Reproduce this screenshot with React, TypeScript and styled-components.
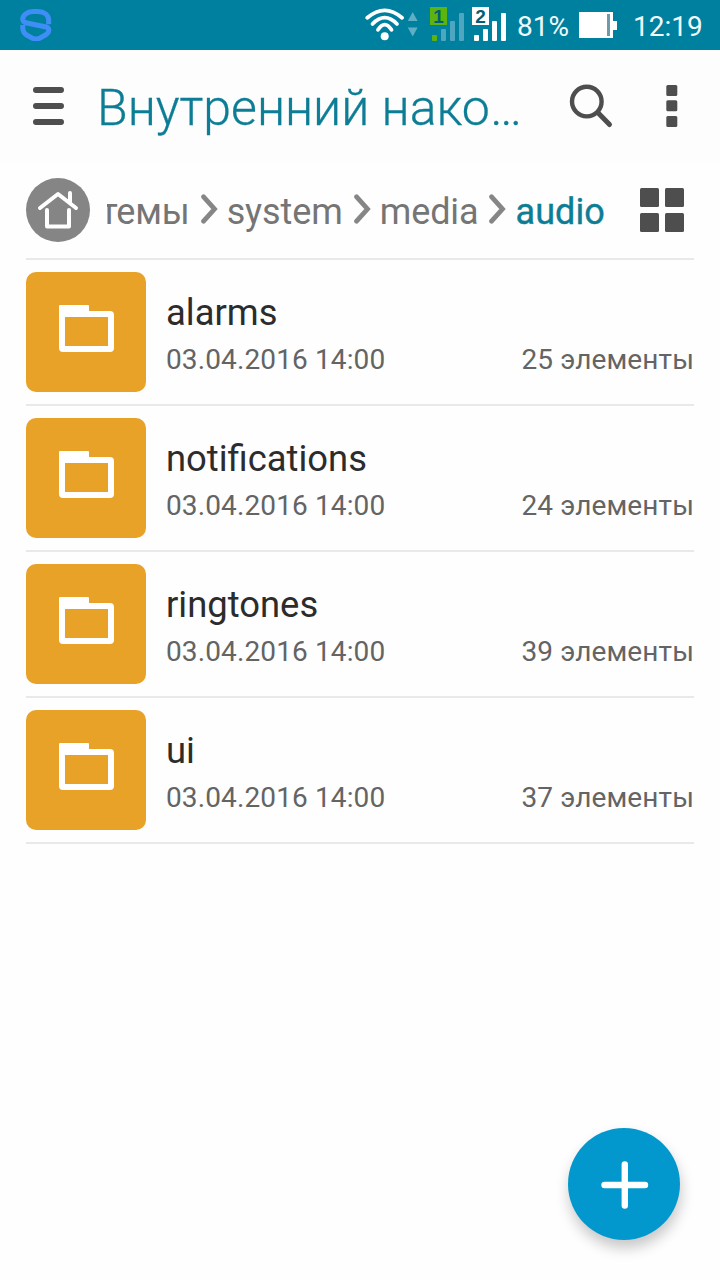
import React from "react";
import styled, { createGlobalStyle } from "styled-components";

const GlobalStyle = createGlobalStyle`
  * { box-sizing: border-box; }
  body { margin: 0; background: #fefefe; font-family: Roboto, "Noto Sans", sans-serif; }
  svg { display: block; flex: none; }
`;

const Screen = styled.div`
  position: relative;
  display: flex;
  flex-direction: column;
  width: 720px;
  height: 1280px;
  overflow: hidden;
  background: #fefefe;
`;

const StatusBar = styled.header`
  display: flex;
  align-items: center;
  height: 50px;
  padding: 0 16px 0 20px;
  background: #00809f;
  color: #f2fafc;
`;

const StatusIcons = styled.div`
  display: flex;
  align-items: center;
  margin-left: auto;
`;

const StatusText = styled.span<{ $left: number; $width: number }>`
  margin-left: ${(p) => p.$left}px;
  width: ${(p) => p.$width}px;
  font-size: 28px;
  line-height: 50px;
  padding-top: 3px;
  white-space: nowrap;
`;

const TitleBar = styled.div`
  display: flex;
  align-items: center;
  height: 114px;
  padding: 0 42px 2px 32px;
  background: #fdfdfd;
`;

const Title = styled.h1`
  flex: none;
  width: 440px;
  margin: 0 32px;
  padding-top: 4px;
  font-size: 50px;
  font-weight: 300;
  line-height: 66px;
  color: #0d7d96;
  -webkit-text-stroke: 0.3px #0d7d96;
  white-space: nowrap;
`;

const IconButton = styled.button`
  display: flex;
  flex: none;
  padding: 0;
  border: 0;
  background: none;
  color: #4e4e4e;
`;

const MenuButton = styled(IconButton)`
  margin-left: 51px;
`;

const Content = styled.main`
  padding: 0 26px;
`;

const PathBar = styled.nav`
  display: flex;
  align-items: center;
  height: 96px;
  padding: 0 10px 2px 0;
  border-bottom: 2px solid #e9e9e9;
`;

const Crumbs = styled.div`
  display: flex;
  flex: none;
  align-items: center;
  justify-content: flex-end;
  width: 498px;
  margin: 0 35px 0 17px;
  overflow: hidden;
`;

const Crumb = styled.span<{ $active?: boolean }>`
  flex: none;
  font-size: 36px;
  line-height: 48px;
  padding-top: 3px;
  letter-spacing: ${(p) => (p.$active ? 0.1 : -0.1)}px;
  color: ${(p) => (p.$active ? "#0d7d96" : "#757575")};
  -webkit-text-stroke: ${(p) => (p.$active ? "0.4px" : "0")} currentColor;
`;

const CrumbGap = styled.span`
  flex: none;
  margin: 0 9px 0 11px;
`;

const FileList = styled.ul`
  margin: 0;
  padding: 0;
  list-style: none;
`;

const FileRow = styled.li`
  display: flex;
  height: 146px;
  padding: 12px 0;
  border-bottom: 2px solid #e9e9e9;
`;

const FolderTile = styled.div`
  display: flex;
  flex: none;
  width: 120px;
  height: 120px;
  padding: 33px;
  border-radius: 10px;
  background: #e7a227;
`;

const FileInfo = styled.div`
  flex: 1;
  padding: 19px 0 0 20px;
`;

const FileName = styled.div`
  margin-bottom: 7px;
  font-size: 36.4px;
  line-height: 44px;
  color: #2c2c2c;
`;

const FileMeta = styled.div`
  display: flex;
  justify-content: space-between;
  font-size: 28px;
  line-height: 36px;
  letter-spacing: 0.12px;
  color: #646464;
`;

const AddButton = styled.button`
  position: absolute;
  right: 40px;
  bottom: 40px;
  display: flex;
  width: 112px;
  height: 112px;
  padding: 0;
  border: 0;
  border-radius: 50%;
  background: #0398cd;
  box-shadow: 1px 8px 14px rgba(0, 0, 0, 0.22);
`;

const LogoIcon = () => (
  <svg width="32" height="32" viewBox="0 0 32 32" fill="none" stroke="#3f8df6" strokeWidth="5">
    <path d="M28.7 15.2V11.5C28.7 6 24 2.7 18 2.6H13C7 2.7 2.6 6 2.8 10.4C3 12.6 4.4 13.4 7 14L25 17.8C28 18.5 29 19.5 28.8 21.4C28.6 24 27 25.2 25 26.3L20 29C17.5 30.2 14.5 30.2 12 29L7 26.3C4.3 24.7 3 22.8 2.8 19.6V16" />
  </svg>
);

const WifiIcon = () => (
  <svg width="65" height="50" viewBox="365 0 65 50" fill="none">
    <g stroke="#fff" strokeWidth="3.8" strokeLinecap="round">
      <path d="M367.3 17.8Q384.7 3 402 17.8" />
      <path d="M372.5 24Q384.7 11.4 397 24" />
      <path d="M378 29.8Q384.7 19.4 391.5 29.8" />
    </g>
    <circle cx="384.7" cy="36.2" r="4" fill="#fff" />
    <path d="M412.7 12L417.6 21H407.8ZM407.8 27.5H417.6L412.7 36.5Z" fill="#5eafc6" />
  </svg>
);

const SimBadge = styled.span<{ $green: boolean }>`
  position: absolute;
  left: 0;
  top: 7px;
  width: 17px;
  height: 18px;
  background: ${(p) => (p.$green ? "#5db30f" : "#fff")};
  color: #006078;
  font: bold 19px/19px "Liberation Sans", sans-serif;
  text-align: center;
`;

const SimBox = styled.div`
  position: relative;
  width: 42px;
`;

const SimSignal = ({ label, green }: { label: string; green: boolean }) => {
  const bar = green ? "#4ea6c1" : "#fff";
  return (
    <SimBox>
      <svg width="42" height="50" viewBox="0 0 42 50" fill={bar}>
        <rect x="2" y="35" width="5" height="6" rx="1" fill={green ? "#5db30f" : "#fff"} />
        <rect x="11" y="29" width="5" height="12" rx="1" />
        <rect x="20" y="21" width="5" height="20" rx="1" />
        <rect x="29" y="13" width="5" height="28" rx="1" />
      </svg>
      <SimBadge $green={green}>{label}</SimBadge>
    </SimBox>
  );
};

const BatteryIcon = () => (
  <svg width="38" height="50" viewBox="579 0 38 50" fill="#fff">
    <path d="M579 12H613V21H617V30H613V38H579Z" />
    <rect x="607" y="14" width="3" height="22" fill="#6f9ba8" />
  </svg>
);

const MenuIcon = () => (
  <svg width="33" height="40" viewBox="32 86 33 40" stroke="currentColor" strokeWidth="6" strokeLinecap="round">
    <path d="M36 90H61M36 106H61M36 122H61" />
  </svg>
);

const SearchIcon = () => (
  <svg width="46" height="46" viewBox="569 83 46 46" fill="none" stroke="currentColor">
    <circle cx="586.8" cy="101.6" r="14.8" strokeWidth="4.4" />
    <path d="M598 112.8L609.5 124.5" strokeWidth="5" strokeLinecap="round" />
  </svg>
);

const MoreIcon = () => (
  <svg width="12" height="42" viewBox="0 0 12 42" fill="currentColor">
    <rect x="0.3" y="0" width="11" height="11" rx="1.5" />
    <rect x="0.3" y="15.3" width="11" height="11" rx="1.5" />
    <rect x="0.3" y="31" width="11" height="11" rx="1.5" />
  </svg>
);

const HomeIcon = () => (
  <svg width="64" height="64" viewBox="26 178 64 64" fill="none" stroke="#fff" strokeWidth="4" strokeLinecap="round" strokeLinejoin="round">
    <circle cx="58" cy="210" r="32" fill="#858585" stroke="none" />
    <path d="M40 208L58 194L76 208M70 202V193M47 210V226.5H69V210" />
  </svg>
);

const Chevron = () => (
  <CrumbGap>
    <svg width="17" height="32" viewBox="0 0 17 32" fill="none" stroke="#868686" strokeWidth="4.8" strokeLinecap="round" strokeLinejoin="miter">
      <path d="M2.6 2.8L13.5 15L2.6 27.2" />
    </svg>
  </CrumbGap>
);

const GridIcon = () => (
  <svg width="44" height="44" viewBox="0 0 44 44" fill="currentColor">
    <rect width="19" height="19" rx="1.5" />
    <rect x="25" width="19" height="19" rx="1.5" />
    <rect y="25" width="19" height="19" rx="1.5" />
    <rect x="25" y="25" width="19" height="19" rx="1.5" />
  </svg>
);

const FolderIcon = () => (
  <svg width="55" height="47" viewBox="0 0 55 47" fill="#fff">
    <path fillRule="evenodd" d="M1 0H29Q30 0 30 1V6H51Q55 6 55 10V43Q55 47 51 47H4Q0 47 0 43V1Q0 0 1 0ZM6 12V41H49V12Z" />
  </svg>
);

const PlusIcon = () => (
  <svg width="112" height="112" viewBox="0 0 112 112" stroke="#fff" strokeWidth="6.4" strokeLinecap="round">
    <path d="M36.5 57H77M56.8 36.5V77.5" />
  </svg>
);

const crumbs = ["системы", "system", "media"];

const folders = [
  { name: "alarms", count: 25 },
  { name: "notifications", count: 24 },
  { name: "ringtones", count: 39 },
  { name: "ui", count: 37 },
];

export default function App() {
  return (
    <>
      <GlobalStyle />
      <Screen>
        <StatusBar>
          <LogoIcon />
          <StatusIcons>
            <WifiIcon />
            <SimSignal label="1" green />
            <SimSignal label="2" green={false} />
            <StatusText $left={3} $width={62}>81%</StatusText>
            <BatteryIcon />
            <StatusText $left={16} $width={71}>12:19</StatusText>
          </StatusIcons>
        </StatusBar>
        <TitleBar>
          <IconButton aria-label="Меню"><MenuIcon /></IconButton>
          <Title>Внутренний нако…</Title>
          <IconButton aria-label="Поиск"><SearchIcon /></IconButton>
          <MenuButton aria-label="Ещё"><MoreIcon /></MenuButton>
        </TitleBar>
        <Content>
          <PathBar>
            <HomeIcon />
            <Crumbs>
              {crumbs.map((c) => (
                <React.Fragment key={c}>
                  <Crumb>{c}</Crumb>
                  <Chevron />
                </React.Fragment>
              ))}
              <Crumb $active>audio</Crumb>
            </Crumbs>
            <IconButton aria-label="Сетка"><GridIcon /></IconButton>
          </PathBar>
          <FileList>
            {folders.map((f) => (
              <FileRow key={f.name}>
                <FolderTile><FolderIcon /></FolderTile>
                <FileInfo>
                  <FileName>{f.name}</FileName>
                  <FileMeta>
                    <span>03.04.2016 14:00</span>
                    <span>{f.count} элементы</span>
                  </FileMeta>
                </FileInfo>
              </FileRow>
            ))}
          </FileList>
        </Content>
        <AddButton aria-label="Добавить"><PlusIcon /></AddButton>
      </Screen>
    </>
  );
}
